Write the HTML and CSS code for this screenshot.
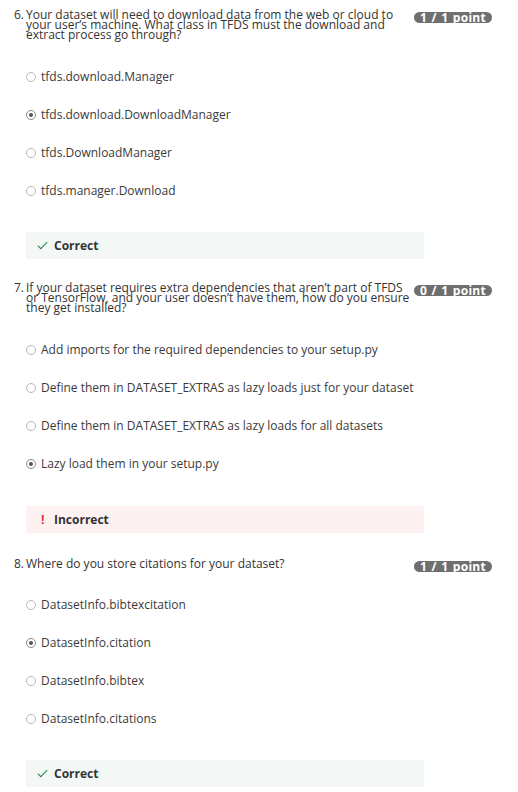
FILE: index.html
```html
<!DOCTYPE html>
<html lang="en">
<head>
<meta charset="utf-8">
<title>Quiz</title>
<link rel="stylesheet" href="styles.css">
</head>
<body>
<div class="quiz">
  <section class="question q6">
    <div class="qhead">
      <span class="num">6.</span>
      <p class="qtext">Your dataset will need to download data from the web or cloud to<br>your user’s machine. What class in TFDS must the download and<br>extract process go through?</p>
      <span class="badge">1 / 1 point</span>
    </div>
    <ul class="options">
      <li class="opt"><span class="radio"></span>tfds.download.Manager</li>
      <li class="opt"><span class="radio checked"></span>tfds.download.DownloadManager</li>
      <li class="opt"><span class="radio"></span>tfds.DownloadManager</li>
      <li class="opt"><span class="radio"></span>tfds.manager.Download</li>
    </ul>
    <div class="feedback correct">
      <svg class="check" width="11" height="9" viewBox="0 0 11 9"><polyline points="0.8,4.6 3.8,7.6 10.2,1.2" fill="none" stroke="#2d8b57" stroke-width="1.1"/></svg>
      <span class="fb-label">Correct</span>
    </div>
  </section>

  <section class="question q7">
    <div class="qhead">
      <span class="num">7.</span>
      <p class="qtext">If your dataset requires extra dependencies that aren’t part of TFDS<br>or TensorFlow, and your user doesn’t have them, how do you ensure<br>they get installed?</p>
      <span class="badge">0 / 1 point</span>
    </div>
    <ul class="options">
      <li class="opt"><span class="radio"></span>Add imports for the required dependencies to your setup.py</li>
      <li class="opt"><span class="radio"></span>Define them in DATASET_EXTRAS as lazy loads just for your dataset</li>
      <li class="opt"><span class="radio"></span>Define them in DATASET_EXTRAS as lazy loads for all datasets</li>
      <li class="opt"><span class="radio checked"></span>Lazy load them in your setup.py</li>
    </ul>
    <div class="feedback incorrect">
      <span class="bang">!</span>
      <span class="fb-label">Incorrect</span>
    </div>
  </section>

  <section class="question q8">
    <div class="qhead">
      <span class="num">8.</span>
      <p class="qtext">Where do you store citations for your dataset?</p>
      <span class="badge">1 / 1 point</span>
    </div>
    <ul class="options">
      <li class="opt"><span class="radio"></span>DatasetInfo.bibtexcitation</li>
      <li class="opt"><span class="radio checked"></span>DatasetInfo.citation</li>
      <li class="opt"><span class="radio"></span>DatasetInfo.bibtex</li>
      <li class="opt"><span class="radio"></span>DatasetInfo.citations</li>
    </ul>
    <div class="feedback correct">
      <svg class="check" width="11" height="9" viewBox="0 0 11 9"><polyline points="0.8,4.6 3.8,7.6 10.2,1.2" fill="none" stroke="#2d8b57" stroke-width="1.1"/></svg>
      <span class="fb-label">Correct</span>
    </div>
  </section>
</div>
</body>
</html>
```

FILE: styles.css
```css
* { box-sizing: border-box; }

html, body {
  margin: 0;
  padding: 0;
  background: #ffffff;
}

body {
  font-family: "Open Sans", "Liberation Sans", sans-serif;
  font-size: 12px;
  color: #333333;
}

.quiz {
  padding: 10px 26px 0 14px;
  width: 518px;
}

.q7 { margin-top: 24px; }
.q8 { margin-top: 26px; }

.qhead {
  display: flex;
  align-items: flex-start;
}

.num {
  flex: none;
  width: 12px;
  line-height: 10px;
}

.qtext {
  flex: 1;
  min-width: 0;
  margin: 0;
  line-height: 10px;
  white-space: nowrap;
}

.badge {
  flex: none;
  width: 78px;
  height: 11px;
  margin-top: 2px;
  margin-bottom: -3px;
  border-radius: 6px;
  background: #6f6f6f;
  color: #ffffff;
  font-weight: 700;
  font-size: 12px;
  line-height: 12.5px;
  letter-spacing: 0.3px;
  word-spacing: 1px;
  text-align: center;
  overflow: hidden;
}

.options {
  list-style: none;
  margin: 17px 0 0 0;
  padding: 0 0 0 12px;
}

.q8 .options { margin-top: 16px; }

.opt {
  display: flex;
  align-items: center;
  height: 38px;
  color: #3a3a3a;
}

.radio {
  flex: none;
  position: relative;
  width: 10px;
  height: 10px;
  margin-right: 5px;
  margin-top: 2px;
  border: 1px solid #b8b8b8;
  border-radius: 50%;
  background: #fff;
}

.radio.checked {
  border-color: #8a8a8a;
}

.radio.checked::after {
  content: "";
  position: absolute;
  left: 2px;
  top: 2px;
  width: 4px;
  height: 4px;
  border-radius: 50%;
  background: #555;
}

.feedback {
  display: flex;
  align-items: center;
  height: 27px;
  width: 398px;
  margin: 23px 0 0 12px;
  padding-left: 11px;
  font-weight: 700;
  color: #333;
}

.q7 .feedback { margin-top: 24px; }

.feedback.correct { background: #f3f8f6; }
.feedback.incorrect { background: #fdf1f2; }

.check {
  flex: none;
  margin-right: 6px;
}

.bang {
  width: 17px;
  padding-left: 4px;
  color: #d6333d;
  font-weight: 700;
}
```
